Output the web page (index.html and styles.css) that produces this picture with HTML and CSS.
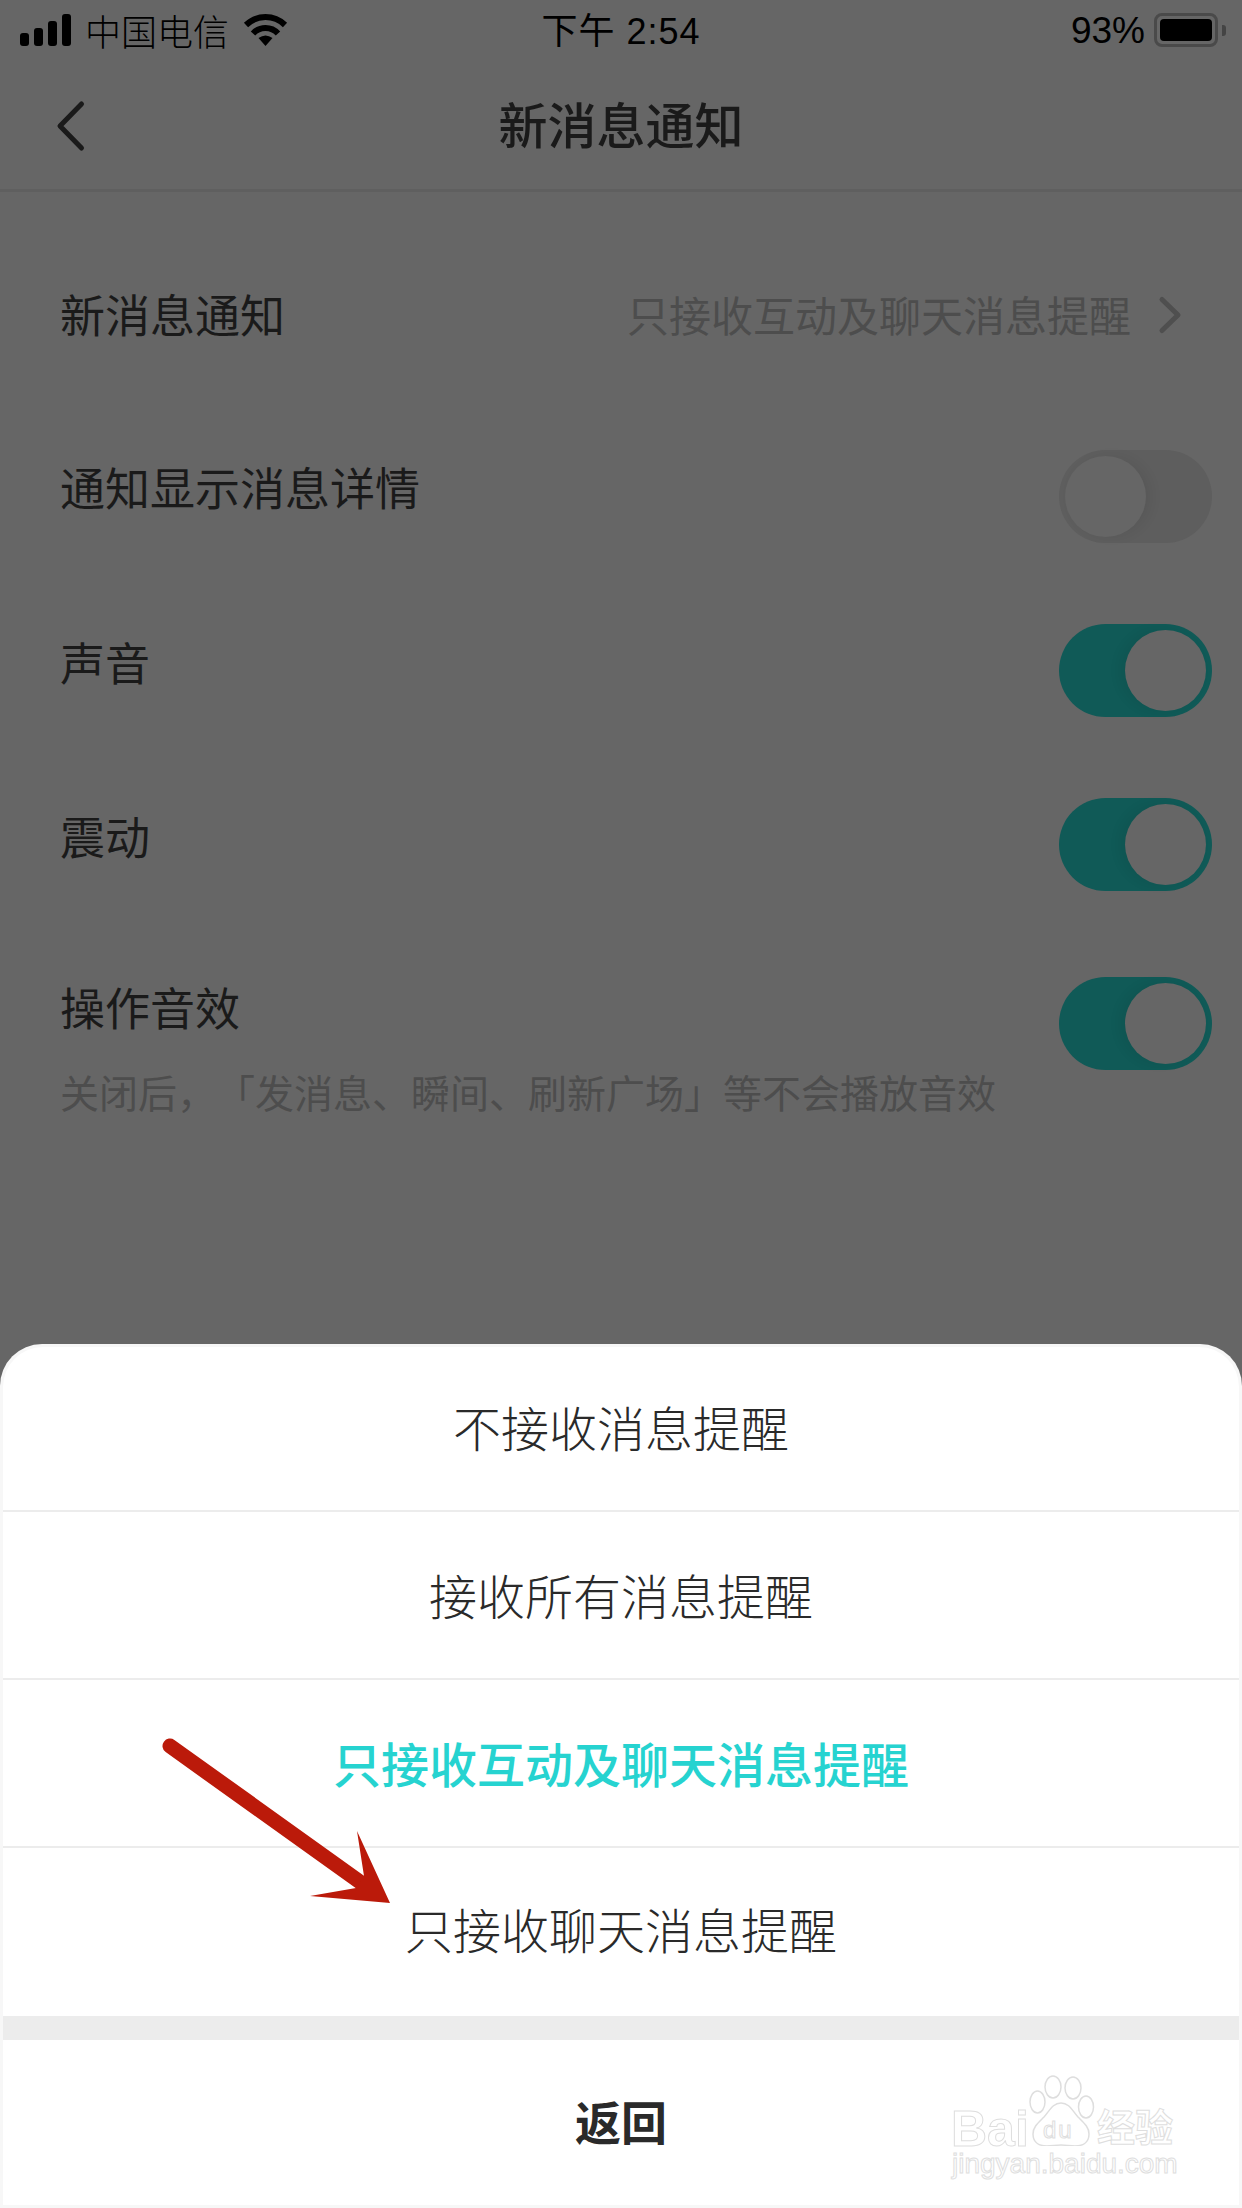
FILE: index.html
```html
<!DOCTYPE html>
<html lang="zh-CN">
<head>
<meta charset="utf-8">
<title>新消息通知</title>
<link rel="stylesheet" href="styles.css">
</head>
<body>
<div class="page">
  <header class="status">
    <div class="status-left">
      <svg class="signal" width="51" height="32" viewBox="0 0 51 32"><rect x="0" y="19" width="9" height="13" rx="3"/><rect x="14" y="14" width="9" height="18" rx="3"/><rect x="28" y="7" width="9" height="25" rx="3"/><rect x="42" y="0" width="9" height="32" rx="3"/></svg>
      <span class="carrier">中国电信</span>
      <svg class="wifi" width="45" height="33" viewBox="0 0 45 33"><path d="M3 12A28 28 0 0 1 42 12" fill="none" stroke="#000" stroke-width="6"/><path d="M10 20.500A17 17 0 0 1 35 20.500" fill="none" stroke="#000" stroke-width="6"/><path d="M15.500 25Q22.500 20 29.500 25L22.500 33z"/></svg>
    </div>
    <div class="clock">下午 2:54</div>
    <div class="status-right">
      <span class="percent">93%</span>
      <span class="battery"><span class="battery-fill"></span></span>
      <span class="battery-cap"></span>
    </div>
  </header>
  <nav class="navbar">
    <svg class="back" width="30" height="52" viewBox="0 0 30 52"><path d="M25.500 4 4 26l21.500 22" fill="none" stroke="#1a1a1a" stroke-width="5" stroke-linecap="round" stroke-linejoin="round"/></svg>
    <h1 class="title">新消息通知</h1>
  </nav>
  <main class="settings">
    <div class="row row-first">
      <span class="label">新消息通知</span>
      <span class="value">只接收互动及聊天消息提醒</span>
      <svg class="chevron" width="24" height="40" viewBox="0 0 24 40"><path d="M4 4.500l16 15.500-16 15.500" fill="none" stroke="#4f4f4f" stroke-width="5" stroke-linecap="round" stroke-linejoin="round"/></svg>
    </div>
    <div class="row row-off">
      <span class="label">通知显示消息详情</span>
      <span class="toggle toggle-off"><span class="knob"></span></span>
    </div>
    <div class="row row-on">
      <span class="label">声音</span>
      <span class="toggle toggle-on"><span class="knob"></span></span>
    </div>
    <div class="row row-on">
      <span class="label">震动</span>
      <span class="toggle toggle-on"><span class="knob"></span></span>
    </div>
    <div class="row row-fx">
      <div class="fx-text">
        <span class="label">操作音效</span>
        <span class="hint">关闭后，「发消息、瞬间、刷新广场」等不会播放音效</span>
      </div>
      <span class="toggle toggle-on"><span class="knob"></span></span>
    </div>
  </main>
  <section class="sheet">
    <div class="option">不接收消息提醒</div>
    <div class="option">接收所有消息提醒</div>
    <div class="option option-active">只接收互动及聊天消息提醒</div>
    <div class="option option-last">只接收聊天消息提醒</div>
    <div class="sheet-gap"></div>
    <div class="option-back">返回</div>
  </section>
  <svg class="arrow" width="240" height="180" viewBox="0 0 240 180"><path d="M10 11 200 147" stroke="#bb1a0a" stroke-width="15" stroke-linecap="round" fill="none"/><path d="M230 168 197 96 204 141 196 153 150 161z" fill="#bb1a0a"/></svg>
  <div class="watermark">
    <span class="wm-bai">Bai</span>
    <svg class="wm-paw" width="66" height="71" viewBox="0 0 66 71"><g fill="#fff" stroke="#dedede" stroke-width="1.500"><ellipse cx="8.500" cy="27" rx="7.500" ry="11"/><ellipse cx="24" cy="12" rx="8" ry="11"/><ellipse cx="44" cy="13" rx="8" ry="11"/><ellipse cx="57" cy="32" rx="7.500" ry="11"/><path d="M32 28c-8 0-11 7-17 14-6 6-11 10-11 17 0 9 7 12 14 12 5 0 9-1 14-1s9 1 14 1c7 0 14-3 14-12 0-7-5-11-11-17-6-7-9-14-17-14z"/></g></svg>
    <span class="wm-du">du</span>
    <span class="wm-jy">经验</span>
    <span class="wm-url">jingyan.baidu.com</span>
  </div>
</div>
</body>
</html>
```
FILE: styles.css
```css
* { box-sizing: border-box; margin: 0; padding: 0; }
html, body { width: 1242px; height: 2208px; overflow: hidden; }
body { background: #666; font-family: "Noto Sans CJK SC", "Noto Sans", sans-serif; }
.page { position: relative; width: 1242px; height: 2208px; display: flex; flex-direction: column; background: #666; }

.status { height: 62px; padding: 0 16px 0 20px; display: flex; align-items: center; position: relative; color: #000; }
.status-left { display: flex; align-items: center; gap: 14px; flex: 1; }
.signal, .wifi { fill: #000; }
.signal { margin-top: -2px; }
.wifi { margin-top: -3px; }
.carrier { font-size: 36px; line-height: 40px; font-weight: 300; margin-top: -3px; }
.clock { position: absolute; left: 0; right: 0; top: 9px; text-align: center; font-size: 36px; letter-spacing: 1px; line-height: 46px; font-family: "Liberation Sans", "Noto Sans CJK SC", sans-serif; }
.status-right { display: flex; align-items: center; margin-top: -2px; }
.percent { font-size: 37px; line-height: 46px; font-family: "Liberation Sans", sans-serif; margin: 2px 9px 0 0; }
.battery { width: 64px; height: 34px; border: 3px solid #4a4a4a; border-radius: 8px; padding: 3px; display: block; }
.battery-fill { display: block; width: 100%; height: 100%; background: #000; border-radius: 4px; }
.battery-cap { width: 4px; height: 11px; background: #444; border-radius: 0 3px 3px 0; margin-left: 4px; }

.navbar { height: 130px; border-bottom: 3px solid #5f5f5f; display: flex; align-items: center; justify-content: center; position: relative; }
.back { position: absolute; left: 56px; top: 38px; }
.title { font-size: 49px; font-weight: 500; color: #1a1a1a; line-height: 60px; margin-top: -6px; }

.settings { padding: 0 30px 0 60px; flex: 1; }
.row { display: flex; align-items: center; }
.label { font-size: 45px; line-height: 60px; color: #1a1a1a; }
.row-first { margin-top: 91px; height: 62px; }
.value { margin-left: auto; font-size: 42px; line-height: 60px; color: #4d4d4d; }
.chevron { margin: 2px 30px 0 27px; }
.row-off { margin-top: 105px; height: 93px; justify-content: space-between; }
.row-off .label { margin-top: -19px; }
.row-on { margin-top: 81px; height: 93px; justify-content: space-between; }
.row-on .label { margin-top: -18px; }
.row-fx { margin-top: 86px; height: 150px; align-items: flex-start; justify-content: space-between; }
.fx-text { display: flex; flex-direction: column; gap: 29px; }
.hint { font-size: 39px; line-height: 50px; color: #4d4d4d; white-space: nowrap; text-spacing-trim: space-all; }

.toggle { width: 153px; height: 93px; border-radius: 47px; display: block; position: relative; flex: none; }
.knob { position: absolute; top: 6px; width: 81px; height: 81px; border-radius: 50%; background: #666; }
.toggle-off { background: #5e5e5e; }
.toggle-off .knob { left: 6px; box-shadow: 6px 0 12px rgba(0,0,0,.06); }
.toggle-on { background: #105a57; }
.toggle-on .knob { right: 6px; box-shadow: -6px 0 12px rgba(0,0,0,.06); }

.sheet { position: absolute; left: 0; right: 0; top: 1344px; height: 864px; padding: 3px; background: #f7f7f7; border-radius: 42px 42px 0 0; display: flex; flex-direction: column; }
.option { height: 168px; padding-bottom: 3px; display: flex; align-items: center; justify-content: center; background: #fff; font-size: 48px; color: #2a2a2a; font-weight: 300; border-bottom: 2px solid #ececec; }
.option:first-child { height: 165px; padding-bottom: 5px; border-radius: 40px 40px 0 0; }
.option-active { color: #26d3d0; font-weight: 500; }
.option-last { border-bottom: 0; padding-bottom: 8px; }
.sheet-gap { height: 24px; background: #ececec; }
.option-back { flex: 1; padding-bottom: 6px; display: flex; align-items: center; justify-content: center; background: #fff; font-size: 46px; font-weight: 700; color: #2a2a2a; }

.arrow { position: absolute; left: 160px; top: 1735px; }

.watermark { position: absolute; left: 950px; top: 2070px; width: 240px; height: 115px; color: #fff; -webkit-text-stroke: 1px #dedede; font-family: "Liberation Sans", sans-serif; }
.wm-bai { position: absolute; left: 1px; top: 41px; font-size: 50px; font-weight: 700; line-height: 36px; }
.wm-paw { position: absolute; left: 79px; top: 5px; }
.wm-du { position: absolute; left: 93px; top: 46px; font-size: 24px; letter-spacing: 2px; line-height: 28px; }
.wm-jy { position: absolute; left: 147px; top: 34px; font-size: 38px; line-height: 42px; font-family: "Noto Sans CJK SC", sans-serif; font-weight: 700; }
.wm-url { position: absolute; left: 2px; top: 80px; font-size: 28px; line-height: 28px; }
```
